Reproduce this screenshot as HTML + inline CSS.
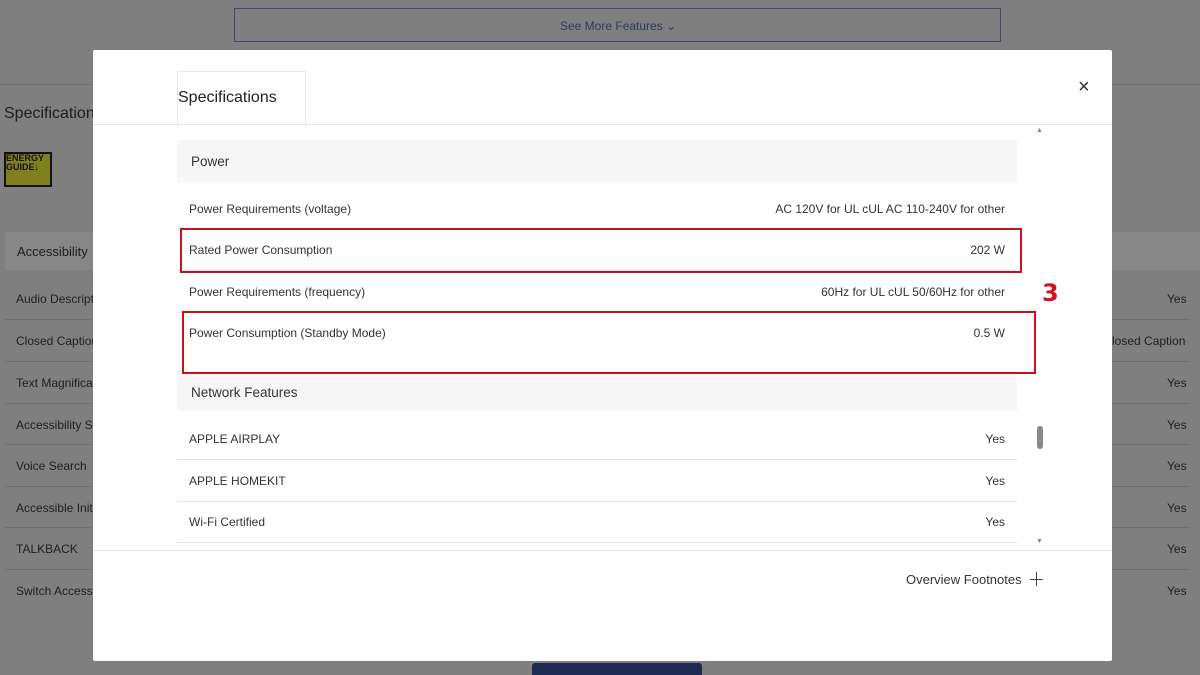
<!DOCTYPE html>
<html><head><style>
body{margin:0;width:1200px;height:675px;overflow:hidden;background:#7f7f7f;font-family:"Liberation Sans",sans-serif;position:relative;color:#222}
.a{position:absolute}
.bgt{font-size:12px;color:#1e1e1e}
.line{position:absolute;height:1px;background:#6f6f6f}
.r{position:absolute;left:177px;width:840px;height:41px;border-bottom:1px solid #e6e6e6;font-size:12px;color:#333}
.r span{position:absolute;top:14px}
.r .l{left:12px}.r .v{right:12px}
.sec{position:absolute;left:177px;width:840px;height:42px;background:#f6f6f6;font-size:13.5px;color:#333}
.sec span{position:absolute;left:14px;top:14px}
.box{position:absolute;border:2px solid #c8101e}
</style></head><body>
<div class="a" style="left:234px;top:8px;width:765px;height:32px;border:1px solid #3b4a6b"></div>
<div class="a bgt" style="left:560px;top:19px;color:#2d3a5e">See More Features ⌄</div>
<div class="line" style="left:0;top:84px;width:1200px"></div>
<div class="a" style="left:4px;top:105px;font-size:16px;color:#1e1e1e">Specification</div>
<div class="a" style="left:4px;top:152px;width:44px;height:31px;background:#80801f;border:2px solid #111;font-size:9px;font-weight:bold;line-height:9px;color:#111">ENERGY<br>GUIDE↓</div>
<div class="a" style="left:5px;top:232px;width:1195px;height:38px;background:#868686"></div>
<div class="a" style="left:17px;top:244px;font-size:13px;color:#1e1e1e">Accessibility</div>
<div class="a bgt" style="left:16px;top:292px">Audio Descript</div>
<div class="a bgt" style="left:16px;top:334px">Closed Caption</div>
<div class="a bgt" style="left:16px;top:376px">Text Magnificat</div>
<div class="a bgt" style="left:16px;top:418px">Accessibility Sh</div>
<div class="a bgt" style="left:16px;top:459px">Voice Search</div>
<div class="a bgt" style="left:16px;top:501px">Accessible Initi</div>
<div class="a bgt" style="left:16px;top:542px">TALKBACK</div>
<div class="a bgt" style="left:16px;top:584px">Switch Access</div>
<div class="a bgt" style="left:1167px;top:292px">Yes</div>
<div class="a bgt" style="left:1112px;top:334px">losed Caption</div>
<div class="a bgt" style="left:1167px;top:376px">Yes</div>
<div class="a bgt" style="left:1167px;top:418px">Yes</div>
<div class="a bgt" style="left:1167px;top:459px">Yes</div>
<div class="a bgt" style="left:1167px;top:501px">Yes</div>
<div class="a bgt" style="left:1167px;top:542px">Yes</div>
<div class="a bgt" style="left:1167px;top:584px">Yes</div>
<div class="line" style="left:5px;top:319px;width:1185px"></div>
<div class="line" style="left:5px;top:361px;width:1185px"></div>
<div class="line" style="left:5px;top:403px;width:1185px"></div>
<div class="line" style="left:5px;top:444px;width:1185px"></div>
<div class="line" style="left:5px;top:486px;width:1185px"></div>
<div class="line" style="left:5px;top:527px;width:1185px"></div>
<div class="line" style="left:5px;top:569px;width:1185px"></div>
<div class="a" style="left:532px;top:663px;width:170px;height:12px;background:#1d2a52;border-radius:3px 3px 0 0"></div>

<div class="a" style="left:93px;top:50px;width:1019px;height:611px;background:#fff;border-radius:2px">
</div>
<div class="a" style="left:177px;top:71px;width:127px;height:54px;border:1px solid #e8e8e8;border-bottom:none;background:#fff"></div>
<div class="a" style="left:178px;top:89px;font-size:16px;color:#222">Specifications</div>
<div class="a" style="left:1078px;top:76px;font-size:20px;color:#333;font-weight:300">×</div>
<div class="a" style="left:93px;top:124px;width:1019px;height:1px;background:#e8e8e8"></div>
<div class="sec" style="top:140px"><span>Power</span></div>
<div class="r" style="top:188px"><span class="l">Power Requirements (voltage)</span><span class="v">AC 120V for UL cUL AC 110-240V for other</span></div>
<div class="r" style="top:229px"><span class="l">Rated Power Consumption</span><span class="v">202 W</span></div>
<div class="r" style="top:271px"><span class="l">Power Requirements (frequency)</span><span class="v">60Hz for UL cUL 50/60Hz for other</span></div>
<div class="r" style="top:312px;height:50px;border-bottom:none"><span class="l">Power Consumption (Standby Mode)</span><span class="v">0.5 W</span></div>
<div class="sec" style="top:371px;height:40px"><span>Network Features</span></div>
<div class="r" style="top:418px"><span class="l">APPLE AIRPLAY</span><span class="v">Yes</span></div>
<div class="r" style="top:460px"><span class="l">APPLE HOMEKIT</span><span class="v">Yes</span></div>
<div class="r" style="top:501px"><span class="l">Wi-Fi Certified</span><span class="v">Yes</span></div>
<div class="box" style="left:180px;top:228px;width:838px;height:41px"></div>
<div class="box" style="left:182px;top:311px;width:850px;height:59px"></div>
<div class="a" style="left:1042px;top:279px;font-size:24px;font-weight:bold;color:#d0141e;font-family:'DejaVu Sans',sans-serif">3</div>
<div class="a" style="left:1036px;top:127px;font-size:7px;color:#888">▲</div>
<div class="a" style="left:1036px;top:538px;font-size:7px;color:#888">▼</div>
<div class="a" style="left:1037px;top:426px;width:6px;height:23px;background:#8a8a8a;border-radius:3px"></div>
<div class="a" style="left:93px;top:550px;width:1019px;height:1px;background:#e8e8e8"></div>
<div class="a" style="left:906px;top:572px;font-size:13px;color:#333">Overview Footnotes</div>
<div class="a" style="left:1030px;top:572px;width:13px;height:1px;background:#444;top:579px"></div>
<div class="a" style="left:1036px;top:572px;width:1px;height:14px;background:#444"></div>
</body></html>
